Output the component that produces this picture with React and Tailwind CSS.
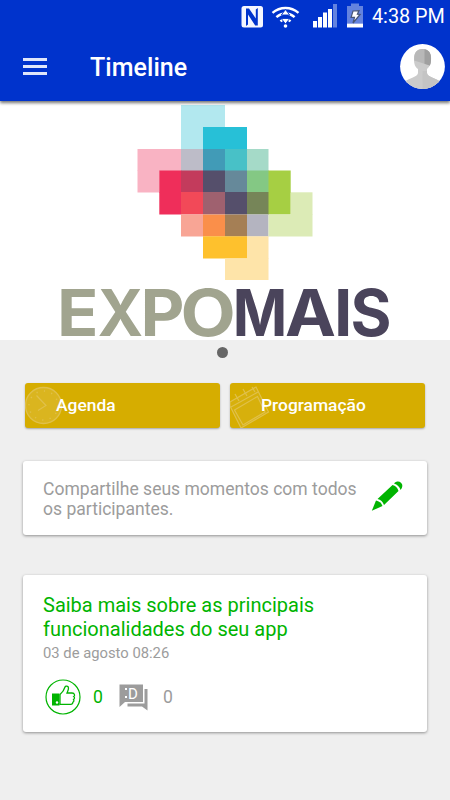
import React from 'react';

const logoTiles = [
  [181, 105, 44, 22, '#b2e8ef'],
  [181, 127, 22, 22, '#b2e8ef'],
  [203, 127, 44, 22, '#27c0d7'],
  [137.5, 149, 43.5, 22, '#f9b3c3'],
  [181, 149, 22, 22, '#bdbcc8'],
  [203, 149, 22, 22, '#419bb7'],
  [225, 149, 22, 22, '#48c1c7'],
  [247, 149, 21.5, 22, '#a5dac8'],
  [137.5, 170.5, 22, 22, '#f9b3c3'],
  [159.3, 170.5, 22, 22, '#ef2e5a'],
  [181, 170.5, 22, 22, '#c33b5c'],
  [203, 170.5, 22, 22, '#554f6b'],
  [225, 170.5, 22, 22, '#66899a'],
  [247, 170.5, 22, 22, '#84c884'],
  [268.5, 170.5, 22.2, 22, '#a6cf43'],
  [159.3, 192, 22, 22.5, '#ef2e5a'],
  [181, 192, 22, 22.5, '#f24958'],
  [203, 192, 22, 22.5, '#9f616f'],
  [225, 192, 22, 22.5, '#554f6b'],
  [247, 192, 22, 22.5, '#768558'],
  [268.5, 192, 22.2, 22.5, '#a6cf43'],
  [290.7, 192.3, 21.8, 22.7, '#dcebb6'],
  [181, 214.5, 22, 22, '#f8a595'],
  [203, 214.5, 22, 22, '#fa8f4a'],
  [225, 214.5, 22, 22, '#a57f55'],
  [247, 214.5, 21.5, 22, '#b4b4c0'],
  [268.5, 214.5, 44, 22, '#dcebb6'],
  [203, 236.3, 44, 22.2, '#fec12d'],
  [247, 236.3, 21.5, 22.7, '#fee4a9'],
  [225, 258.5, 43.5, 21.5, '#fee4a9'],
];

// letter, x, advance width, colour
const logoLetters = [
  ['E', 57, 41.5, '#a1a48f'],
  ['X', 97.8, 45.4, '#a1a48f'],
  ['P', 140.5, 44, '#a1a48f'],
  ['O', 180.5, 55.3, '#a1a48f'],
  ['M', 232.8, 54.5, '#4a445b'],
  ['A', 285, 51, '#4a445b'],
  ['I', 334, 18.4, '#4a445b'],
  ['S', 350.5, 41, '#4a445b'],
];

const StatusIcons = () => (
  <svg className="block h-[32px] w-[130px]" viewBox="238 0 130 32">
    {/* nfc */}
    <rect x="241.5" y="6" width="21.5" height="21.5" rx="2.500" fill="#f4f6ff" />
    <path d="M246 26V8.500h3l6.800 10V9.500l2-1.500v17.500h-2.600L248 14.500V24.500z" fill="#0033cc" />
    {/* wifi */}
    <g fill="none" stroke="#fff" strokeWidth="2.400">
      <path d="M272.500 12.800c7.500-6.500 18.500-6.500 26 0" />
      <path d="M276.400 17.200c5.500-5 12.700-5 18.200 0" />
      <path d="M280.500 21.300c3-2.800 7-2.800 10 0" />
    </g>
    <path d="m285.500 9.500 4.200 5.500h-8.400zM285.500 24l-4.200-5.500h8.400z" fill="#fff" stroke="#0033cc" strokeWidth=".9" />
    <circle cx="285.500" cy="26" r="1.800" fill="#fff" />
    {/* signal */}
    <path d="M313 21h4v6.500h-4zM318 17h4v10.500h-4zM323 12.500h4v15h-4zM328 9h4v18.500h-4z" fill="#fff" />
    <path d="M333 4h4v23.500h-4z" fill="#6483df" />
    {/* battery */}
    <path d="M351 3.500h8V6h4v17.500h-16V6h4z" fill="#6483df" />
    <path d="M347 23.500h16v4h-16z" fill="#fff" />
    <path d="m353 11 6-.4-1.600 3.600 2.700.2-7.100 8.600 1.500-5.700-3.400.1z" fill="#fff" stroke="#465577" strokeWidth="1.200" />
  </svg>
);

const Avatar = () => (
  <svg className="size-[46px]" viewBox="0 0 46 46">
    <defs>
      <clipPath id="avatar">
        <circle cx="22.500" cy="22.500" r="22.400" />
      </clipPath>
    </defs>
    <circle cx="22.500" cy="22.500" r="22.400" fill="#fff" />
    <g clipPath="url(#avatar)">
      <path d="M14 15c0-6.500 3-10 8.500-10s8.500 3.500 8.500 10c0 5-1.500 8-4 10v4c0 4 9 5 14 9v9H4v-9c5-4 14-5 14-9v-4c-3-2-4-5-4-10z" fill="#cbcbcb" />
      <path d="M14.200 16.500c-.5-7.500 2.300-11.500 8.300-11.500s9 4 8.500 11.500c-.2 2-.5 3.500-1.200 5z" fill="#b8b8b8" />
      <path d="M24.500 5.200c5 .8 7 5 6.500 11.300-.2 2-.5 3.500-1.200 5l-5.300-1.800z" fill="#a0a0a0" />
      <path d="M22.500 27H27v2c0 4 9 5 14 9v9H22.500z" fill="#c4c4c4" />
    </g>
  </svg>
);

const Header = () => (
  <header className="relative z-10 h-[101px] bg-[#0033cc] text-white shadow-[0_2px_3px_rgba(0,0,0,0.55)]">
    <div className="flex h-8 justify-end pr-[5px]">
      <StatusIcons />
      <span className="ml-1 w-[73px] whitespace-nowrap text-[19.8px] leading-[34px]">4:38 PM</span>
    </div>
    <div className="flex h-[69px] items-center pr-1 pl-[23px]">
      <button className="flex h-[17px] w-6 flex-col justify-between" aria-label="Menu">
        <span className="h-[3px] w-full bg-[#dfe6fa]" />
        <span className="h-[3px] w-full bg-[#dfe6fa]" />
        <span className="h-[3px] w-full bg-[#dfe6fa]" />
      </button>
      <h1 className="mt-[2px] ml-[43px] flex-1 text-[25px] leading-8 font-medium tracking-[0.05px]">Timeline</h1>
      <Avatar />
    </div>
  </header>
);

const Banner = () => (
  <section className="bg-white">
    <svg className="block h-[239px] w-full overflow-visible" viewBox="0 101 450 239">
      {logoTiles.map(([x, y, w, h, fill]) => (
        <rect key={`${x}-${y}`} x={x} y={y} width={w} height={h} fill={fill} />
      ))}
      <g className="font-[Inter,sans-serif] text-[64.5px] font-bold">
        {logoLetters.map(([letter, x, width, fill]) => (
          <text key={letter} x={x} y="335.500" textLength={width} lengthAdjust="spacingAndGlyphs" fill={fill}>
            {letter}
          </text>
        ))}
      </g>
    </svg>
  </section>
);

const ClockIcon = () => (
  <svg className="absolute top-0 left-0 h-[45px] w-10" viewBox="0 0 40 45" fill="none" stroke="#e0c04a">
    <circle cx="18.500" cy="22.500" r="18" fill="#dab51f" strokeWidth="1.300" />
    <path d="m11.500 12.500 9.500 10-8 5" strokeWidth="1.200" />
    <circle cx="18.500" cy="22.500" r="14.500" strokeWidth="1.500" strokeDasharray="1.200 6.390" />
  </svg>
);

const CalendarIcon = () => (
  <svg className="absolute top-0 left-0 h-[45px] w-10" viewBox="0 0 40 45" fill="none" stroke="#e0c04a" strokeWidth="1.200">
    <path d="M0 19 26 4l12.500 25L11 45 0 23z" fill="#dab51f" fillOpacity=".4" />
    <path d="m1 24 27-15M4.500 27l23-13.500L35 29 13 42zM5 11l4 7M13 6l4 7M22 4l3 5" />
  </svg>
);

const MenuButton = ({ label, icon }) => (
  <button className="relative h-[45px] overflow-hidden rounded-[3px] bg-[#d6ad00] pl-[31px] text-left text-[17.4px] font-medium text-white shadow-[0_1px_2px_rgba(0,0,0,0.3)]">
    {icon}
    <span className="relative">{label}</span>
  </button>
);

const PencilIcon = () => (
  <svg className="mt-[10px] size-8" viewBox="0 0 32 32" fill="#00b400">
    <path d="M.8 29.800 5 19.500c3 .6 5.300 2.300 6.500 5.500z" />
    <path d="M6.500 18 21.500 4c3 .8 5 2.800 6 6L13 24c-1.200-3.300-3.200-5.300-6.500-6z" />
    <path d="M23 2.500c2.300-2.300 5-2.500 7-.7s1.800 4.700-.4 7.200c-1-3.300-3.200-5.500-6.600-6.500z" />
  </svg>
);

const LikeIcon = () => (
  <svg className="size-9" viewBox="0 0 36 36" fill="none" stroke="#00b400">
    <circle cx="18" cy="18" r="17" strokeWidth="1.200" />
    <path d="M15 15.500c3-2.500 4-4 5-7.500.5-1.500 3.500-1 3.500 1s-1 3.500-1.500 5h5c3 0 3 3 1.800 3.500 1.200 1 .7 2.500-.3 3 .7 1 .4 2.500-.7 2.800.2 1.200-.8 2-2 2H15z" strokeWidth="1.300" />
    <path d="M7 14.500h7.500v12H7z" fill="#00b400" stroke="none" />
    <circle cx="12" cy="23.500" r="1.200" fill="#fff" stroke="none" />
  </svg>
);

const CommentIcon = () => (
  <svg className="h-7 w-[29px]" viewBox="0 0 29 28">
    <path d="M.5 1.500H24V19H6l-5.500 5z" fill="#9c9c9c" />
    <path d="M25.500 6H28.500v21.500L23 23.500H8.500v-3h17z" fill="#9c9c9c" />
    <path d="M6 5h2v2H6zM6 13h2v2H6z" fill="#fff" />
    <text x="9" y="15.500" fill="#fff" className="text-[15px]">D</text>
  </svg>
);

const App = () => {
  return (
    <div className="min-h-screen w-full bg-[#efefef] font-[Roboto,sans-serif]">
      <Header />
      <Banner />

      <div className="relative flex h-[43px] justify-center pt-[7px] pr-[5px]">
        <span className="size-[11px] rounded-full bg-[#666]" />
      </div>

      <nav className="grid grid-cols-2 gap-[10px] px-[25px]">
        <MenuButton label="Agenda" icon={<ClockIcon />} />
        <MenuButton label="Programação" icon={<CalendarIcon />} />
      </nav>

      <main className="mt-[33px] flex flex-col gap-10 px-[23px]">
        <section className="flex h-[74px] rounded-[3px] bg-white pt-[10px] pr-6 pl-5 shadow-[0_1px_3px_rgba(0,0,0,0.4)]">
          <p className="mt-2 flex-1 text-[17.55px] leading-5 whitespace-nowrap text-[#9c9c9c]">
            Compartilhe seus momentos com todos
            <br />
            os participantes.
          </p>
          <PencilIcon />
        </section>

        <article className="h-[157px] rounded-[3px] bg-white pt-[18px] pl-5 shadow-[0_1px_3px_rgba(0,0,0,0.4)]">
          <h2 className="text-[20px] leading-6 text-[#00b400]">
            Saiba mais sobre as principais
            <br />
            funcionalidades do seu app
          </h2>
          <p className="mt-[2px] text-[14.8px] leading-5 text-[#9c9c9c]">03 de agosto 08:26</p>
          <div className="mt-4 flex items-center pl-[2px] text-[17.6px]">
            <LikeIcon />
            <span className="ml-3 w-[26px] text-[#00b400]">0</span>
            <CommentIcon />
            <span className="ml-[15px] text-[#9c9c9c]">0</span>
          </div>
        </article>
      </main>
    </div>
  );
};

export default App;
